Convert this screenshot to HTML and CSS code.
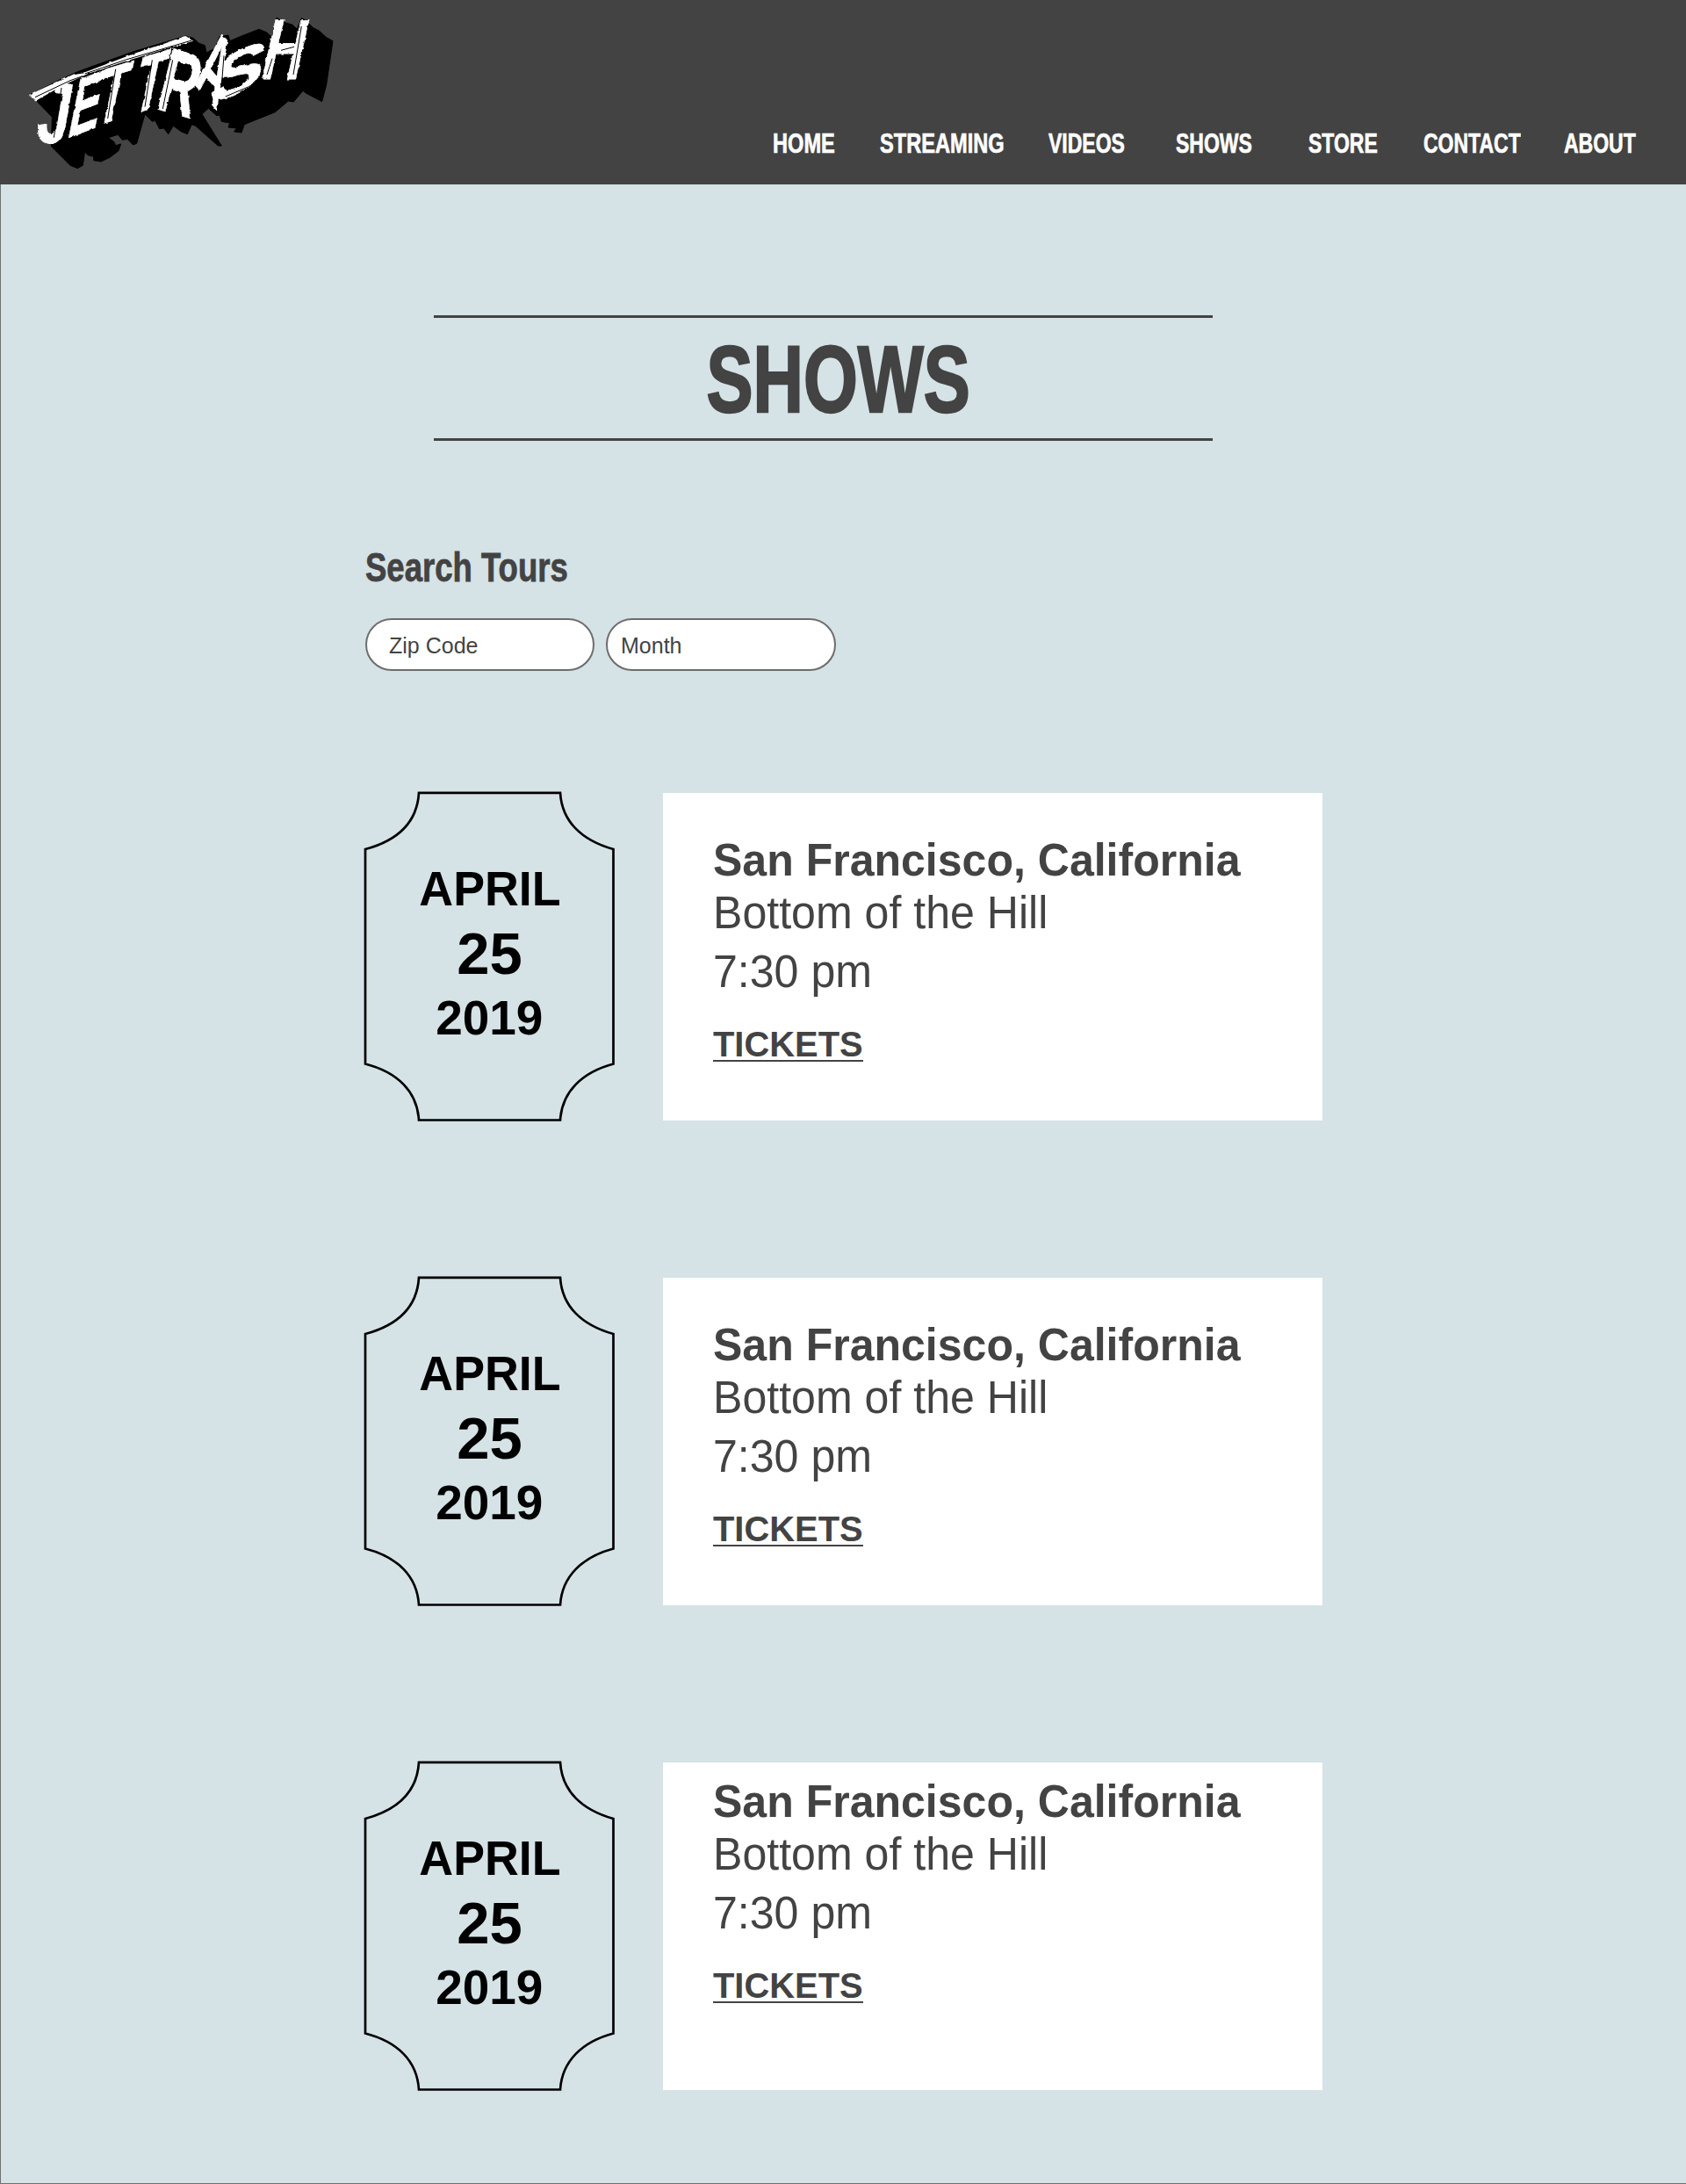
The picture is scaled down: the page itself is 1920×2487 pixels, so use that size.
FILE: index.html
```html
<!DOCTYPE html>
<html lang="en">
<head>
<meta charset="utf-8">
<title>Jet Trash - Shows</title>
<link rel="stylesheet" href="styles.css">
</head>
<body>
<svg class="defs" width="0" height="0" aria-hidden="true">
  <symbol id="ticket-frame" viewBox="0 0 287 376">
    <path d="M63 1.8H224C226 35 249 56 284.500 66V310.500C249 320 226 342 224 374.500H63C61 342 39 320 2 310.500V66C39 56 61 35 63 1.800Z" fill="none" stroke="#000" stroke-width="2.700"/>
  </symbol>
</svg>
<header class="header">
  <a class="logo" href="#">
    <svg viewBox="0 0 1200 630" width="400" height="210" role="img" aria-label="Jet Trash">
      <defs>
        <filter id="rough" filterUnits="userSpaceOnUse" x="0" y="0" width="1200" height="630" color-interpolation-filters="sRGB">
          <feTurbulence type="fractalNoise" baseFrequency="0.05" numOctaves="2" seed="4"/>
          <feDisplacementMap in="SourceGraphic" scale="9" xChannelSelector="R" yChannelSelector="G"/>
        </filter>
      </defs>
      <path class="logo-shadow" d="M100 325L125 345L178 400L175 500L215 540L240 565L265 575L283 565L290 518L300 530L320 535L320 548L345 552L375 538L405 515L413 492L395 497L390 485L370 470L403 460L418 478L435 475L455 495L467 490L495 390L520 415L530 412L545 440L560 438L575 458L592 430L620 450L640 458L655 425L668 430L745 498L757 498L690 390L712 370L740 395L750 393L757 415L785 420L780 435L808 438L800 450L825 453L835 425L940 383L985 345L1003 348L1035 310L1045 318L1100 347L1115 290L1137 140L1115 128L1090 105L1070 95L1045 70L1030 62L1015 100L1000 85L968 75L945 60L938 135L910 110L885 100L820 125L785 140L780 120L750 125L735 165L705 180L700 155L680 148L660 130L635 123L460 175L320 225L265 245L200 275Z"/>
      <g class="logo-letters" filter="url(#rough)">
        <text transform="matrix(1.95 .2 -.51 2.95 118 482)">J</text>
        <text transform="matrix(1.6 -.6 -.58 2.9 224 474)">E</text>
        <text transform="matrix(1.65 -.5 -.61 2.85 317 433)">T</text>
        <text transform="matrix(1.65 -.5 -.61 2.85 444 393)">T</text>
        <text transform="matrix(1.75 .5 -.75 3 528 370)">R</text>
        <text transform="matrix(1.1 1.29 -.93 2.99 664 287)">A</text>
        <text transform="matrix(2.75 -1.15 -.55 2.3 706 362)">S</text>
        <text transform="matrix(1.95 0 -.68 2.95 882 269)">H</text>
        <path class="logo-bar" d="M100 323L255 252L292 246L460 182L635 123L660 140L570 166L415 214L300 252L215 292L122 344Z"/>
      </g>
      <path class="logo-scratch" d="M120 332L240 275L282 260M290 252L430 204L560 166L655 138M210 300L184 470M395 236L368 405M520 205L495 365M590 205L556 372M262 470L315 448M290 385L330 368M765 190L758 280M770 330L850 296L900 266M820 165L860 138L905 124M960 172L1005 160M1030 90L1002 255M930 200L912 255"/>
    </svg>
  </a>
  <nav class="nav">
    <a class="nav-link" href="#">HOME</a>
    <a class="nav-link" href="#">STREAMING</a>
    <a class="nav-link narrow" href="#">VIDEOS</a>
    <a class="nav-link narrow" href="#">SHOWS</a>
    <a class="nav-link narrow" href="#">STORE</a>
    <a class="nav-link narrow" href="#">CONTACT</a>
    <a class="nav-link narrow" href="#">ABOUT</a>
  </nav>
</header>
<main class="main">
  <div class="title-band"><h1 class="title">SHOWS</h1></div>
  <section class="search">
    <h2 class="search-title">Search Tours</h2>
    <div class="fields">
      <div class="field zip">Zip Code</div>
      <div class="field month">Month</div>
    </div>
  </section>
  <section class="shows">
    <article class="show">
      <div class="date">
        <svg class="frame"><use href="#ticket-frame"/></svg>
        <span class="month-name">APRIL</span><span class="day">25</span><span class="year">2019</span>
      </div>
      <div class="card">
        <h3 class="city">San Francisco, California</h3>
        <p class="venue">Bottom of the Hill</p>
        <p class="time">7:30 pm</p>
        <a class="tickets" href="#">TICKETS</a>
      </div>
    </article>
    <article class="show">
      <div class="date">
        <svg class="frame"><use href="#ticket-frame"/></svg>
        <span class="month-name">APRIL</span><span class="day">25</span><span class="year">2019</span>
      </div>
      <div class="card">
        <h3 class="city">San Francisco, California</h3>
        <p class="venue">Bottom of the Hill</p>
        <p class="time">7:30 pm</p>
        <a class="tickets" href="#">TICKETS</a>
      </div>
    </article>
    <article class="show">
      <div class="date">
        <svg class="frame"><use href="#ticket-frame"/></svg>
        <span class="month-name">APRIL</span><span class="day">25</span><span class="year">2019</span>
      </div>
      <div class="card raised">
        <h3 class="city">San Francisco, California</h3>
        <p class="venue">Bottom of the Hill</p>
        <p class="time">7:30 pm</p>
        <a class="tickets" href="#">TICKETS</a>
      </div>
    </article>
  </section>
</main>
</body>
</html>
```
FILE: styles.css
```css
* { box-sizing: border-box; }
body {
  margin: 0;
  font-family: "Liberation Sans", Arial, sans-serif;
  color: #434343;
  background: #d5e2e6;
}
h1, h2, h3, p { margin: 0; }
a { color: inherit; text-decoration: none; }
.defs { position: absolute; }

.header {
  display: flex;
  justify-content: space-between;
  height: 210px;
  background: #434343;
}
.logo { width: 400px; height: 210px; }
.logo svg { display: block; }
.logo-shadow { fill: #000; stroke: #000; stroke-width: 3; stroke-linejoin: round; }
.logo-letters {
  fill: #fff;
  font: bold 100px "Liberation Sans", Arial, sans-serif;
}
.logo-letters text {
  stroke: #fff;
  stroke-width: .8;
}
.logo-scratch { fill: none; stroke: #000; stroke-width: 3; }
.nav {
  display: grid;
  grid-template-columns: 122px 192px 145px 151px 131px 160px 139px;
  padding-top: 143px;
  color: #fff;
}
.nav-link {
  justify-self: start;
  font-size: 31.5px;
  font-weight: bold;
  line-height: 40px;
  white-space: nowrap;
  transform: scaleX(.75);
  transform-origin: left;
  -webkit-text-stroke: .7px #fff;
}
.nav-link.narrow { transform: scaleX(.73); }

.main {
  height: 2277px;
  padding: 149px 0 0 413px;
  border-left: 1px solid #707070;
  border-bottom: 1px solid #707070;
}
.title-band {
  display: flex;
  justify-content: center;
  width: 887px;
  height: 143px;
  margin-left: 80px;
  padding-left: 35px;
  border-top: 3px solid #434343;
  border-bottom: 3px solid #434343;
}
.title {
  font-size: 107.8px;
  line-height: 140px;
  transform: scaleX(.737);
  -webkit-text-stroke: 2.5px #434343;
}
.search { padding: 115px 0 0 2px; }
.search-title {
  font-size: 45.5px;
  line-height: 60px;
  transform: scaleX(.803);
  transform-origin: left;
  -webkit-text-stroke: .8px #434343;
}
.fields { display: flex; gap: 13px; margin-top: 27px; }
.field {
  width: 261px;
  height: 60px;
  padding-left: 25px;
  border: 2px solid #6d6d6d;
  border-radius: 30px;
  background: #fff;
  font-size: 25px;
  line-height: 59px;
}
.field.month { width: 262px; padding-left: 15px; }

.shows { padding-top: 137px; }
.show { display: flex; height: 376px; margin-bottom: 176px; }
.date {
  position: relative;
  display: flex;
  flex-direction: column;
  align-items: center;
  width: 287px;
  margin-right: 54px;
  padding-top: 81px;
  font-weight: bold;
  color: #000;
}
.frame { position: absolute; left: 0; top: 0; width: 287px; height: 376px; }
.month-name { font-size: 56px; line-height: 60px; transform: scaleX(.96); }
.day { font-size: 67px; line-height: 80px; margin: 4px 0 3px; }
.year { font-size: 56px; line-height: 60px; transform: scaleX(.98); }
.card {
  width: 751px;
  height: 373px;
  margin-top: 1.700px;
  padding: 46px 0 0 56.500px;
  background: #fff;
}
.card.raised { padding-top: 14px; }
.card > * { transform-origin: left; white-space: nowrap; }
.city { font-size: 52px; line-height: 60px; transform: scaleX(.962); }
.venue, .time { font-size: 51px; line-height: 60px; transform: scaleX(.982); }
.venue { margin-top: 1px; }
.time { margin-top: 7px; }
.tickets {
  display: inline-block;
  height: 45px;
  margin-top: 27px;
  border-bottom: 2px solid #434343;
  font-size: 41.3px;
  font-weight: bold;
  line-height: 50px;
  transform: scaleX(.966);
}
```
